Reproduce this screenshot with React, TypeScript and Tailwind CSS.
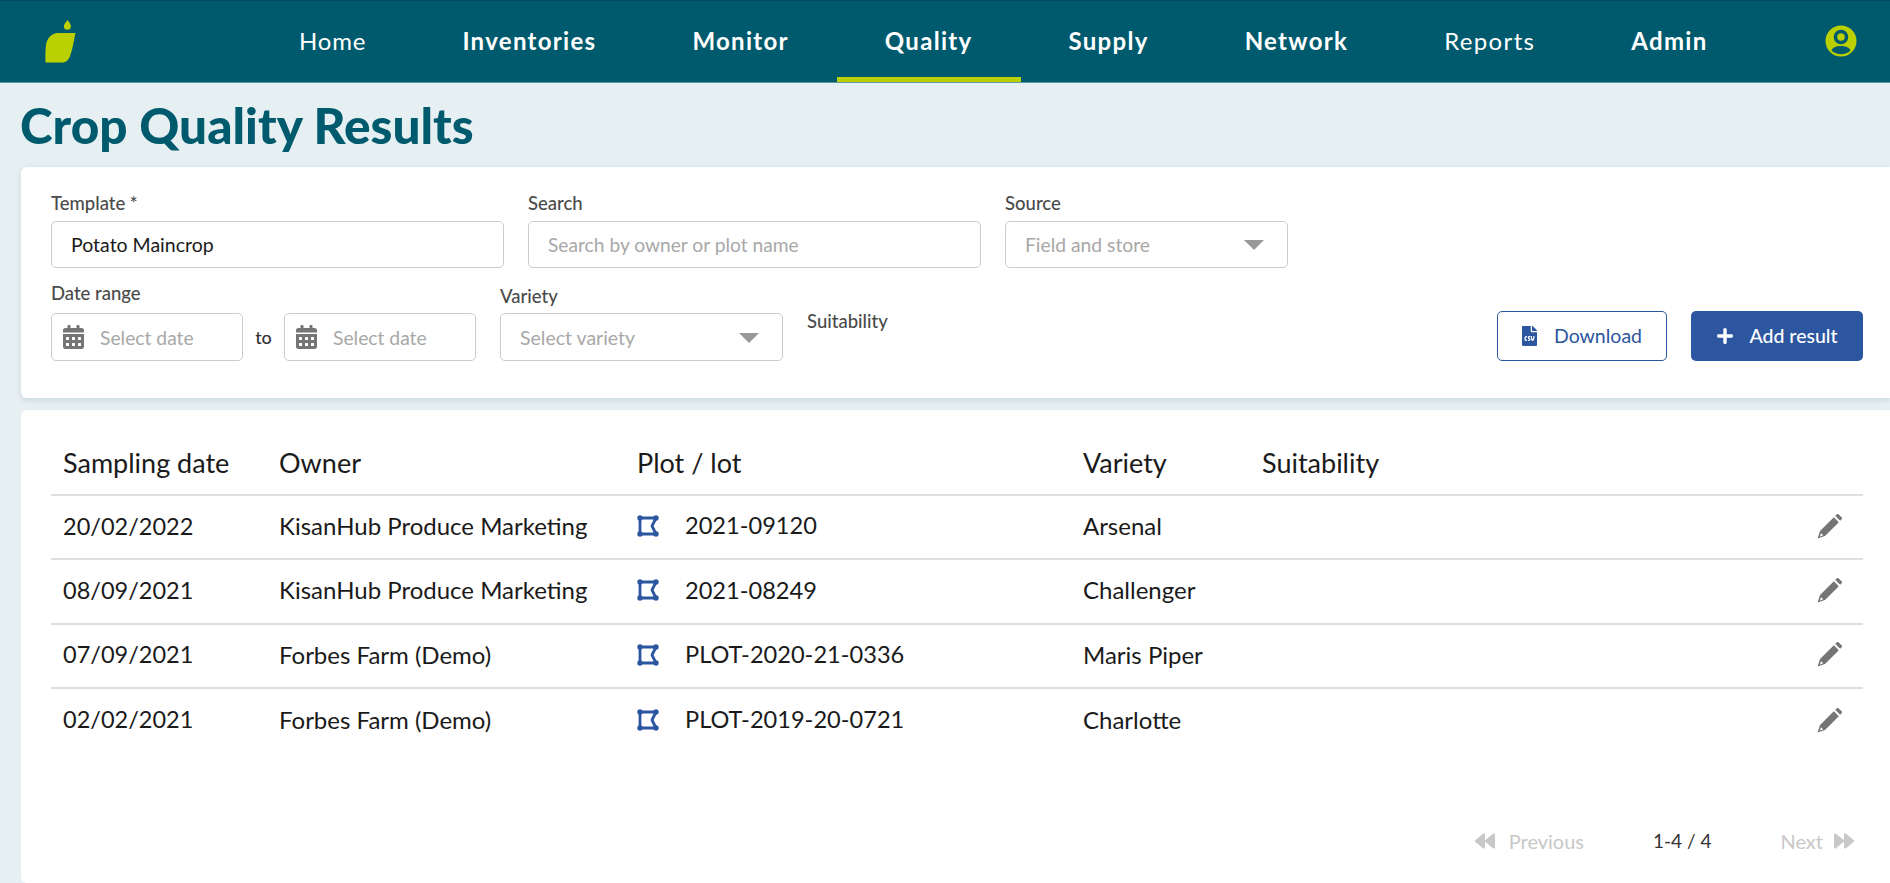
import { FaBackward, FaCalendarAlt, FaFileCsv, FaForward, FaPlus } from "react-icons/fa";

const navItems = [
  { label: "Home", style: "font-normal tracking-[0.850px]" },
  { label: "Inventories", style: "font-bold tracking-[1.300px]" },
  { label: "Monitor", style: "font-bold tracking-[1.300px]" },
  { label: "Quality", style: "font-bold tracking-[1.300px]", active: true },
  { label: "Supply", style: "font-bold tracking-[1.300px]" },
  { label: "Network", style: "font-bold tracking-[1.300px]" },
  { label: "Reports", style: "font-normal tracking-[1.350px]" },
  { label: "Admin", style: "font-bold tracking-[1.300px]" },
];

const rows = [
  { date: "20/02/2022", owner: "KisanHub Produce Marketing", plot: "2021-09120", variety: "Arsenal" },
  { date: "08/09/2021", owner: "KisanHub Produce Marketing", plot: "2021-08249", variety: "Challenger" },
  { date: "07/09/2021", owner: "Forbes Farm (Demo)", plot: "PLOT-2020-21-0336", variety: "Maris Piper" },
  { date: "02/02/2021", owner: "Forbes Farm (Demo)", plot: "PLOT-2019-20-0721", variety: "Charlotte" },
];

function Logo() {
  return (
    <svg width="32" height="44" viewBox="0 0 32 44" className="shrink-0">
      <path d="M22.500 0c1.800 2.400 3.400 4.300 3.400 6.300a3.500 3.500 0 0 1-7 0C18.900 4.300 20.700 2.400 22.500 0z" fill="#bbd000" />
      <path d="M12 13h18.500C29 20 27.500 30 25 36c-1.500 4-3.500 6.500-8 6.500H.5C.3 37 .3 31 1 25c.8-6 5-11.500 11-12z" fill="#bbd000" />
    </svg>
  );
}

function UserIcon() {
  return (
    <svg width="32" height="32" viewBox="0 0 32 32">
      <circle cx="16" cy="16" r="15.500" fill="#bbd000" />
      <circle cx="16" cy="12" r="5.500" fill="none" stroke="#005a6e" strokeWidth="3.500" />
      <path d="M6.500 25.500c1.500-3.500 5-4.500 9.500-4.500s8 1 9.500 4.500C23 28 19.500 29.200 16 29.200S9 28 6.500 25.500z" fill="#005a6e" />
    </svg>
  );
}

function PlotIcon() {
  return (
    <svg width="22" height="22" viewBox="0 0 22 22" fill="none">
      <path d="M3 3h16l-4 8 4 8H3z" stroke="#2d56a0" strokeWidth="2.800" strokeLinejoin="round" />
      <circle cx="3" cy="3" r="2.700" fill="#2d56a0" />
      <circle cx="19" cy="3" r="2.700" fill="#2d56a0" />
      <circle cx="3" cy="19" r="2.700" fill="#2d56a0" />
      <circle cx="19" cy="19" r="2.700" fill="#2d56a0" />
    </svg>
  );
}

function PencilIcon() {
  return (
    <svg width="25" height="25" viewBox="0 0 25 25" fill="#757575">
      <path d="M18.200 1.800 19.700.4a1.400 1.400 0 0 1 2 0l2.900 2.900a1.400 1.400 0 0 1 0 2L23.200 6.800z" />
      <path fillRule="evenodd" d="M16.800 3.200 21.800 8.200 8 22 .6 24.400 3 17zM3.900 19.600l-1 3 3 -1c-.2-1-1-1.800-2-2z" />
    </svg>
  );
}

function Caret() {
  return <span className="w-0 h-0 border-x-[10px] border-x-transparent border-t-[10px] border-t-[#999999]" />;
}

function DateField() {
  return (
    <div className="w-[192px] h-[48px] flex items-center border border-[#cccccc] rounded-[5px] pl-[11px] bg-white">
      <FaCalendarAlt className="text-[#757575] w-[21px] h-[24px] shrink-0" />
      <span className="ml-[16px] pt-[2px] text-[19.300px] text-[#a8a8a8]">Select date</span>
    </div>
  );
}

export default function App() {
  return (
    <div className="h-screen overflow-hidden flex flex-col bg-[#e6eff2] font-['Lato',sans-serif]">
      <nav className="h-[83px] shrink-0 flex bg-[#005a6e] border-t border-t-[#004c5e] border-b border-b-[#5d98a6]">
        <div className="w-[251px] shrink-0 pl-[45px] pt-[19px]">
          <Logo />
        </div>
        <ul className="flex">
          {navItems.map((item) => (
            <li
              key={item.label}
              className={`px-[48px] flex items-center pt-[4px] text-[24px] text-white border-b-[5px] ${
                item.active ? "border-b-[#bbd000]" : "border-b-transparent"
              } ${item.style}`}
            >
              {item.label}
            </li>
          ))}
        </ul>
        <div className="ml-auto mr-[33px] pt-[24px]">
          <UserIcon />
        </div>
      </nav>

      <h1 className="h-[84px] shrink-0 flex items-center pl-[20px] text-[49.500px] font-black text-[#005a6e]">
        Crop Quality Results
      </h1>

      <section className="ml-[21px] h-[231px] shrink-0 bg-white rounded-l-[6px] shadow-[0_2px_6px_rgba(0,60,80,0.12)] pl-[30px] pr-[27px] pt-[26px]">
        <div className="flex gap-[24px]">
          <div className="w-[453px]">
            <label className="block h-[20px] mb-[8px] text-[18.500px] leading-[20px] font-medium text-[#4a4a4a]">Template *</label>
            <div className="h-[47px] flex items-center border border-[#cccccc] rounded-[5px] px-[19px] pt-[1px] text-[19.500px] text-[#1a1a1a]">
              Potato Maincrop
            </div>
          </div>
          <div className="w-[453px]">
            <label className="block h-[20px] mb-[8px] text-[18.500px] leading-[20px] font-medium text-[#4a4a4a]">Search</label>
            <div className="h-[47px] flex items-center border border-[#cccccc] rounded-[5px] px-[19px] pt-[1px] text-[19.200px] text-[#a8a8a8]">
              Search by owner or plot name
            </div>
          </div>
          <div className="w-[283px]">
            <label className="block h-[20px] mb-[8px] text-[18.500px] leading-[20px] font-medium text-[#4a4a4a]">Source</label>
            <div className="h-[47px] flex items-center justify-between border border-[#cccccc] rounded-[5px] pl-[19px] pr-[23px] pt-[1px] text-[19.300px] text-[#a8a8a8]">
              Field and store
              <Caret />
            </div>
          </div>
        </div>

        <div className="flex items-end mt-[15px]">
          <div className="mr-[24px]">
            <label className="block h-[20px] mb-[10px] text-[18.500px] leading-[20px] font-medium text-[#4a4a4a]">Date range</label>
            <div className="flex items-center">
              <DateField />
              <span className="w-[41px] text-center text-[18px] font-medium text-[#333333]">to</span>
              <DateField />
            </div>
          </div>
          <div className="w-[283px] mr-[24px]">
            <label className="block h-[20px] mb-[7px] text-[18.500px] leading-[20px] font-medium text-[#4a4a4a]">Variety</label>
            <div className="h-[48px] flex items-center justify-between border border-[#cccccc] rounded-[5px] pl-[19px] pr-[23px] pt-[1px] text-[19.500px] text-[#a8a8a8]">
              Select variety
              <Caret />
            </div>
          </div>
          <label className="block h-[20px] mb-[30px] text-[18.500px] leading-[20px] font-medium text-[#4a4a4a]">Suitability</label>
          <div className="ml-auto flex gap-[24px]">
            <button className="w-[170px] h-[50px] flex items-center justify-center gap-[17px] border border-[#2d56a0] rounded-[5px] bg-white text-[19.500px] text-[#2d56a0]">
              <FaFileCsv className="w-[15px] h-[20px]" />
              Download
            </button>
            <button className="w-[172px] h-[50px] flex items-center justify-center gap-[15px] rounded-[5px] bg-[#2d56a0] text-[19.500px] font-medium text-white">
              <FaPlus className="w-[18px] h-[18px]" />
              Add result
            </button>
          </div>
        </div>
      </section>

      <section className="mt-[12px] ml-[21px] flex-1 flex flex-col bg-white rounded-l-[6px] pl-[30px] pr-[27px]">
        <div className="h-[86px] grid grid-cols-[216px_358px_446px_179px_1fr] items-center pl-[12px] pt-[22px] text-[27px] text-[#1a1a1a] border-b-2 border-b-[#dedede]">
          <span>Sampling date</span>
          <span>Owner</span>
          <span>Plot / lot</span>
          <span>Variety</span>
          <span>Suitability</span>
        </div>
        {rows.map((row, i) => (
          <div
            key={row.plot}
            className={`h-[64.300px] grid grid-cols-[216px_358px_446px_179px_1fr_auto] items-center pl-[12px] pr-[21px] pb-[2px] text-[24px] text-[#1a1a1a] ${
              i < 3 ? "border-b-2 border-b-[#dedede]" : ""
            }`}
          >
            <span className="text-[23.500px]">{row.date}</span>
            <span>{row.owner}</span>
            <span className="flex items-center gap-[26px] text-[23.600px]">
              <PlotIcon />
              {row.plot}
            </span>
            <span>{row.variety}</span>
            <span />
            <PencilIcon />
          </div>
        ))}
        <div className="mt-[73px] flex items-center justify-end pr-[9px] text-[20px]">
          <FaBackward className="w-[20px] h-[20px] text-[#c8c8c8]" />
          <span className="ml-[14px] text-[#c8c8c8]">Previous</span>
          <span className="ml-[69px] text-[19px] text-[#333333]">1-4 / 4</span>
          <span className="ml-[69px] text-[#c8c8c8]">Next</span>
          <FaForward className="ml-[11px] w-[20px] h-[20px] text-[#c8c8c8]" />
        </div>
      </section>
    </div>
  );
}
